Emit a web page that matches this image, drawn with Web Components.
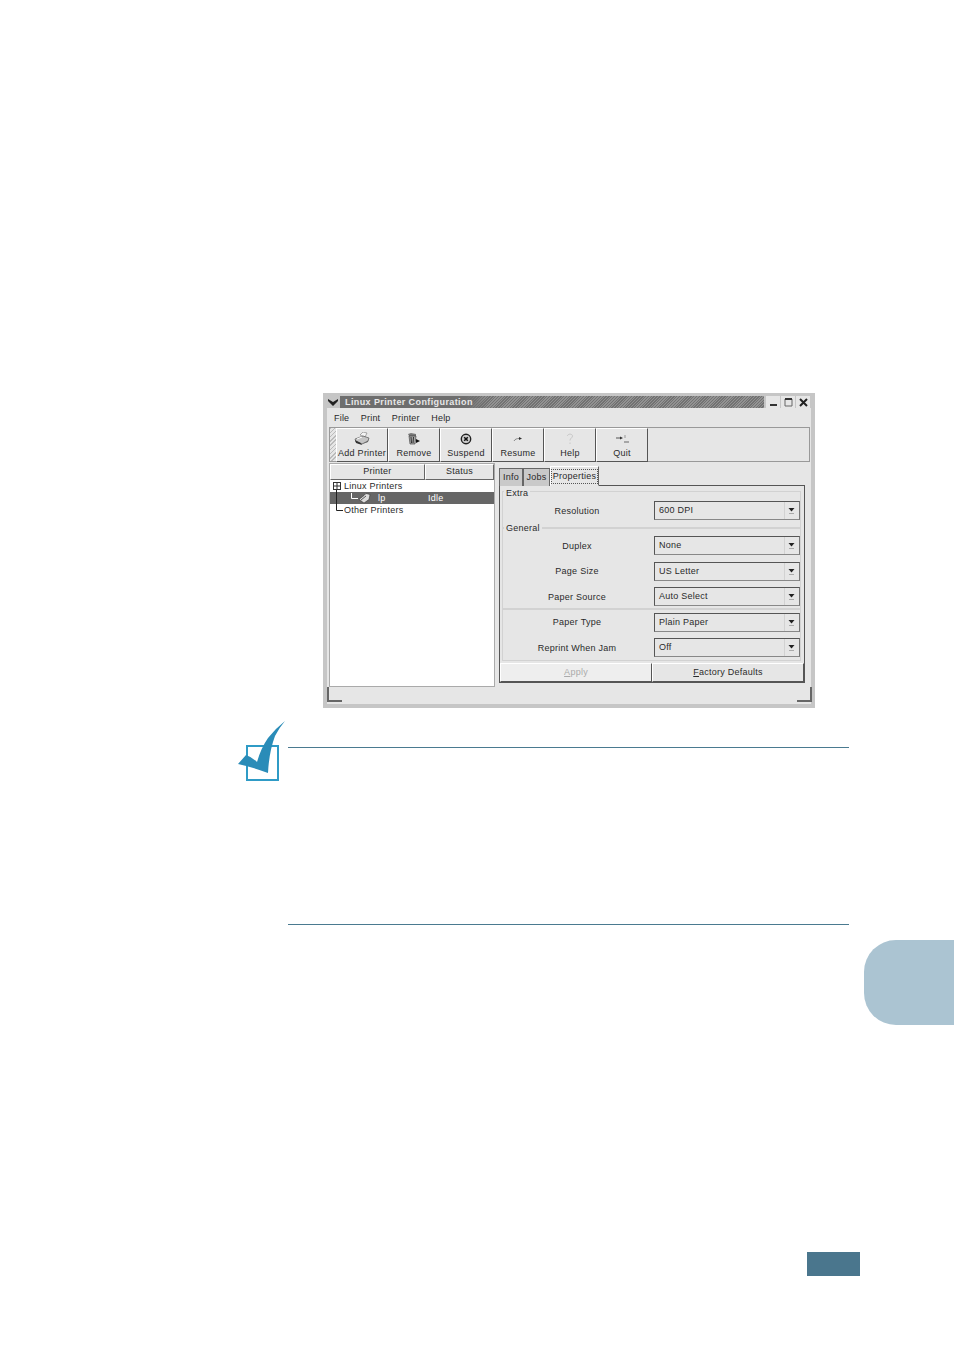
<!DOCTYPE html>
<html>
<head>
<meta charset="utf-8">
<title>Linux Printer Configuration</title>
<style>
  html, body { margin: 0; background: #fff; }
  body { font: 9px "Liberation Sans", Arial, sans-serif; letter-spacing: .25px; color: #2a2a2a; }
</style>
</head>
<body>
<manual-page>
  <printer-window></printer-window>
  <note-box></note-box>
</manual-page>

<script>
const ICONS = {
  add: `<svg width="16" height="13" viewBox="0 0 16 13"><path d="M6 3l3-3 4 1-2 4z" fill="#f4f4f4" stroke="#777" stroke-width=".6"/><path d="M1 7l8-3 6 2-1 3-6 3-6-2z" fill="#c4c4c4" stroke="#444" stroke-width=".6"/><path d="M1 8l6 3 1 2-6-2z" fill="#333"/><path d="M8 12l6-3 1-3-1 4z" fill="#555"/><path d="M3 7l5-2" stroke="#fff"/></svg>`,
  remove: `<svg width="14" height="12" viewBox="0 0 14 12"><path d="M1 1l3-1 5 1v2H2z" fill="#777"/><path d="M2 3h7l-1 8H3z" fill="#a8a8a8" stroke="#333" stroke-width=".6"/><path d="M4 4l.5 6M6.500 4L6 10" stroke="#222" stroke-width=".9"/><path d="M9 6l4 2-4 2z" fill="#111"/></svg>`,
  suspend: `<svg width="12" height="12" viewBox="0 0 12 12"><circle cx="6" cy="6" r="4.700" fill="#cfcfcf" stroke="#222" stroke-width="1.400"/><path d="M4.200 4.200l3.600 3.600M7.800 4.200L4.200 7.800" stroke="#111" stroke-width="1.500"/></svg>`,
  resume: `<svg width="10" height="6" viewBox="0 0 10 6"><path d="M1 5c1-2 3-2.500 5-2.500" fill="none" stroke="#888"/><path d="M6 1l3 1.500L6 4z" fill="#333"/></svg>`,
  help: `<svg width="8" height="12" viewBox="0 0 8 12"><path d="M1.500 3c0-2.500 5-2.500 5 0 0 2-2.500 2-2.500 4.500M4 9.500v1.500" fill="none" stroke="#c8c8c8"/></svg>`,
  quit: `<svg width="13" height="9" viewBox="0 0 13 9"><path d="M0 4h5" stroke="#555"/><path d="M4 2.500L7 4 4 5.500z" fill="#333"/><path d="M9 1v3" stroke="#999"/><path d="M8 8h5" stroke="#666"/></svg>`,
};

class ManualPage extends HTMLElement {
  constructor() {
    super();
    this.attachShadow({ mode: "open" });
    this.shadowRoot.innerHTML = `
    <style>
      :host { display: block; position: relative; width: 954px; height: 1346px; padding-top: 393px; box-sizing: border-box; overflow: hidden; }
      .side-tab { position: absolute; left: 864px; top: 940px; width: 90px; height: 85px; background: #abc4d2; border-radius: 32px 0 0 32px; }
      .page-no { position: absolute; left: 807px; top: 1252px; width: 53px; height: 24px; background: #4a768d; }
    </style>
    <slot></slot>
    <div class="side-tab"></div>
    <div class="page-no"></div>`;
  }
}

class ToolButton extends HTMLElement {
  constructor() {
    super();
    this.attachShadow({ mode: "open" });
    this.shadowRoot.innerHTML = `
    <style>
      :host { display: flex; flex-direction: column; align-items: center; box-sizing: border-box; width: 52px; height: 34px; background: #e6e6e6; border: 1px solid; border-color: #fff #555 #555 #fff; white-space: nowrap; }
      .icon { height: 17px; margin: 1px 0; display: flex; align-items: center; justify-content: center; }
      .label { line-height: 11px; }
    </style>
    <div class="icon">${ICONS[this.getAttribute("icon")]}</div>
    <div class="label"><slot></slot></div>`;
  }
}

class ComboRow extends HTMLElement {
  constructor() {
    super();
    this.attachShadow({ mode: "open" });
    this.shadowRoot.innerHTML = `
    <style>
      :host { display: grid; grid-template-columns: 151px 146px; align-items: center; height: 19px; }
      .label { text-align: center; padding-right: 3px; line-height: 18px; }
      .combo { display: flex; box-sizing: border-box; height: 19px; border: 1px solid; border-color: #555 #777 #888 #555; background: #e6e6e6; }
      .value { flex: 1; padding-left: 4px; line-height: 16px; }
      .arrow { box-sizing: border-box; width: 15px; padding-right: 1px; border-left: 1px solid #d2d2d2; display: flex; align-items: center; justify-content: center; }
    </style>
    <div class="label">${this.getAttribute("label")}</div>
    <div class="combo">
      <div class="value"><slot></slot></div>
      <div class="arrow"><svg width="7" height="9" viewBox="0 0 7 9"><path d="M.5 2h6L3.500 5.500z" fill="#222"/><path d="M1 7.500h5" stroke="#aaa"/></svg></div>
    </div>`;
  }
}

class FieldGroup extends HTMLElement {
  constructor() {
    super();
    this.attachShadow({ mode: "open" });
    this.shadowRoot.innerHTML = `
    <style>
      :host { display: block; position: relative; box-sizing: border-box; width: 299px; border: 1px solid #d2d2d2; }
      .legend { position: absolute; left: 1px; top: var(--legend-top, -6px); padding: 0 2px; line-height: 10px; background: #e6e6e6; }
      .rows { display: flex; flex-direction: column; gap: 6.5px; }
    </style>
    <div class="legend">${this.getAttribute("legend")}</div>
    <div class="rows"><slot></slot></div>`;
  }
}

class PrinterTree extends HTMLElement {
  constructor() {
    super();
    this.attachShadow({ mode: "open" });
    this.shadowRoot.innerHTML = `
    <style>
      :host { display: block; box-sizing: border-box; width: 166px; height: 224px; border: 1px solid #aaa; background: #fff; }
      .head { display: grid; grid-template-columns: 95px 1fr; height: 16px; }
      .head div { display: flex; align-items: center; justify-content: center; background: #e6e6e6; box-sizing: border-box; padding-bottom: 2px; border: 1px solid; border-color: #fff #666 #666 #fff; }
      .tree { position: relative; }
      .row { height: 12px; line-height: 12px; padding-left: 14px; display: flex; align-items: center; }
      .row.sel { background: #666; color: #fff; padding-left: 48px; }
      .row.sel span { width: 50px; }
      .lines { position: absolute; left: 0; top: 0; }
    </style>
    <div class="head"><div>Printer</div><div>Status</div></div>
    <div class="tree">
      <div class="row">Linux Printers</div>
      <div class="row sel"><span>lp</span><span>Idle</span></div>
      <div class="row">Other Printers</div>
      <svg class="lines" width="60" height="36" viewBox="0 0 60 36">
        <rect x="3.500" y="2.500" width="7" height="7" fill="#fff" stroke="#333"/>
        <path d="M3.500 6h7M7 2.500v7" stroke="#333"/>
        <path d="M6.500 10v20.500H13" fill="none" stroke="#222"/>
        <path d="M21.500 13v5.500H28" fill="none" stroke="#fff"/>
        <path d="M29 19.500l5-4 2-2 4 1-1 5-5 3.500z" fill="#dcdcdc" stroke="#222" stroke-width=".5"/>
        <path d="M31 20l5-4" stroke="#555"/>
      </svg>
    </div>`;
  }
}

class PropertiesTab extends HTMLElement {
  constructor() {
    super();
    this.attachShadow({ mode: "open" });
    this.shadowRoot.innerHTML = `
    <style>
      :host { display: block; width: 306px; }
      .tabs { display: flex; align-items: flex-end; height: 23px; margin-bottom: -1px; position: relative; }
      .tab { box-sizing: border-box; height: 18px; padding-bottom: 2px; display: flex; align-items: center; justify-content: center; background: #c9c9c9; border: 1px solid #666; border-bottom: 0; }
      .tab.on { height: 20px; padding-bottom: 0; background: #e6e6e6; border-color: #fff #666 #e6e6e6 #fff; border-bottom: 1px solid #e6e6e6; z-index: 1; }
      .tab.on span { border: 1px dotted #555; padding: 1px 1px; line-height: 11px; }
      .frame { box-sizing: border-box; height: 198px; border: 1px solid #555; padding: 5px 2px 0 1px; background: #e6e6e6; }
      .extra { height: 37px; padding-top: 9px; --legend-top: -4px; margin-left: 1px; }
      .general { height: 133px; padding-top: 7px; margin-left: 1px; }
      .rule { height: 2px; background: #d2d2d2; margin: -4.5px 0 -4px; }
      .buttons { display: grid; grid-template-columns: 152px 1fr; margin: 2px -2px 0 -1px; height: 19px; }
      .buttons div { display: flex; align-items: center; justify-content: center; box-sizing: border-box; padding-bottom: 1px; border: 1px solid; border-color: #fff #555 #555 #fff; background: #e6e6e6; }
      .buttons .off { background: #eee; color: #aaa; }
      u { text-underline-offset: 1px; }
    </style>
    <div class="tabs">
      <div class="tab" style="width:24px">Info</div>
      <div class="tab" style="width:27px">Jobs</div>
      <div class="tab on" style="width:49px"><span>Properties</span></div>
    </div>
    <div class="frame">
      <field-group class="extra" legend="Extra">
        <combo-row label="Resolution">600 DPI</combo-row>
      </field-group>
      <field-group class="general" legend="General">
        <combo-row label="Duplex">None</combo-row>
        <combo-row label="Page Size">US Letter</combo-row>
        <combo-row label="Paper Source">Auto Select</combo-row>
        <div class="rule"></div>
        <combo-row label="Paper Type">Plain Paper</combo-row>
        <combo-row label="Reprint When Jam">Off</combo-row>
      </field-group>
      <div class="buttons">
        <div class="off"><span><u>A</u>pply</span></div>
        <div><span><u>F</u>actory Defaults</span></div>
      </div>
    </div>`;
  }
}

class PrinterWindow extends HTMLElement {
  constructor() {
    super();
    this.attachShadow({ mode: "open" });
    const tools = [["add", "Add Printer"], ["remove", "Remove"], ["suspend", "Suspend"], ["resume", "Resume"], ["help", "Help"], ["quit", "Quit"]];
    this.shadowRoot.innerHTML = `
    <style>
      :host { display: block; box-sizing: border-box; width: 492px; height: 315px; margin-left: 323px; padding: 3px 4px 4px; background: #c6c6c6; position: relative; }
      .inner { height: 100%; background: #e6e6e6; display: flex; flex-direction: column; position: relative; }
      .title { display: flex; align-items: center; height: 12px; background: #c6c6c6; margin: 0 -1px; }
      .menu-btn { width: 13px; display: flex; justify-content: center; }
      .bar { flex: 1; height: 12px; margin-left: 1px; padding-left: 5px; line-height: 12px; font-weight: bold; letter-spacing: .4px; color: #e8e8e8;
        background: linear-gradient(to right, #6e6e6e 0 125px, transparent 150px), repeating-linear-gradient(135deg, #727272 0 1px, #929292 1px 2px); }
      .wbtns { display: flex; gap: 1px; margin: 0 2px 0 2px; }
      .wbtns div { width: 14px; height: 12px; background: #e6e6e6; display: flex; align-items: center; justify-content: center; }
      .menu { display: flex; box-sizing: border-box; height: 19px; padding: 4px 0 0 7px; line-height: 12px; letter-spacing: .2px; }
      .menu span { margin-right: 11.500px; }
      .toolbar { display: flex; box-sizing: border-box; height: 35px; margin: 0 1px 0 2px; border: 1px solid #999; }
      .grip { width: 6px; background: repeating-linear-gradient(135deg, #bbb 0 1px, #e6e6e6 1px 3px); }
      .panes { display: flex; margin: 1px 0 0 2px; gap: 4px; }
      .status { flex: 1; }
      .corner { position: absolute; width: 13px; height: 13px; bottom: 2px; }
      .corner.l { left: 0; border-left: 2px solid #666; border-bottom: 2px solid #666; }
      .corner.r { right: -1px; border-right: 2px solid #666; border-bottom: 2px solid #666; }
    </style>
    <div class="inner">
      <div class="title">
        <div class="menu-btn"><svg width="10" height="8" viewBox="0 0 10 8"><path d="M0 1l5 3 5-3v2L5 8 0 3z" fill="#222"/></svg></div>
        <div class="bar">Linux Printer Configuration</div>
        <div class="wbtns">
          <div><svg width="9" height="9" viewBox="0 0 9 9"><path d="M1 6h7v2H1z" fill="#333"/></svg></div>
          <div><svg width="9" height="9" viewBox="0 0 9 9"><path d="M1 1h7v7H1z" fill="none" stroke="#666"/><path d="M1 1h7" stroke="#333" stroke-width="2"/></svg></div>
          <div><svg width="9" height="9" viewBox="0 0 9 9"><path d="M1 1l7 7M8 1L1 8" stroke="#222" stroke-width="2"/></svg></div>
        </div>
      </div>
      <div class="menu"><span>File</span><span>Print</span><span>Printer</span><span>Help</span></div>
      <div class="toolbar">
        <div class="grip"></div>
        ${tools.map(([icon, label]) => `<tool-button icon="${icon}">${label}</tool-button>`).join("")}
      </div>
      <div class="panes">
        <printer-tree></printer-tree>
        <properties-tab></properties-tab>
      </div>
      <div class="status"></div>
      <div class="corner l"></div>
      <div class="corner r"></div>
    </div>`;
  }
}

class NoteBox extends HTMLElement {
  constructor() {
    super();
    this.attachShadow({ mode: "open" });
    this.shadowRoot.innerHTML = `
    <style>
      :host { display: block; position: relative; box-sizing: border-box; width: 561px; height: 178px; margin: 39px 0 0 288px; border-top: 1px solid #4a7a90; border-bottom: 1px solid #4a7a90; }
      svg { position: absolute; left: -50px; top: -28px; }
    </style>
    <svg width="50" height="62" viewBox="0 0 50 62">
      <rect x="9" y="26" width="31" height="34" fill="none" stroke="#2f9bc6" stroke-width="2"/>
      <path d="M0 44L8 35Q14 37 19 42Q23 28 30 18Q38 8 47 1Q41 8 37 16Q31 32 30 53Q14 47 0 44z" fill="#2a8cb8"/>
    </svg>`;
  }
}

customElements.define("manual-page", ManualPage);
customElements.define("tool-button", ToolButton);
customElements.define("combo-row", ComboRow);
customElements.define("field-group", FieldGroup);
customElements.define("printer-tree", PrinterTree);
customElements.define("properties-tab", PropertiesTab);
customElements.define("printer-window", PrinterWindow);
customElements.define("note-box", NoteBox);
</script>
</body>
</html>
